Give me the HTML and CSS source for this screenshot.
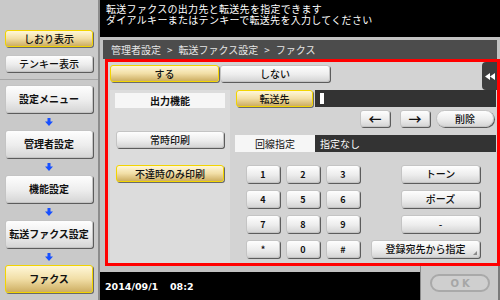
FILE: index.html
```html
<!DOCTYPE html>
<html lang="ja">
<head>
<meta charset="utf-8">
<link rel="stylesheet" href="styles.css">
</head>
<body>
<div class="screen">
  <aside class="side">
    <div class="side-top">
      <div class="btn yellow side-btn">しおり表示</div>
      <div class="btn side-btn">テンキー表示</div>
    </div>
    <div class="side-nav">
      <div class="btn nav-btn">設定メニュー</div>
      <div class="arrow"><svg width="8" height="8" viewBox="0 0 8 8"><path d="M2.5 0h3v3.5H8L4 8 0 3.5h2.5z" fill="#1850ff"/></svg></div>
      <div class="btn nav-btn">管理者設定</div>
      <div class="arrow"><svg width="8" height="8" viewBox="0 0 8 8"><path d="M2.5 0h3v3.5H8L4 8 0 3.5h2.5z" fill="#1850ff"/></svg></div>
      <div class="btn nav-btn">機能設定</div>
      <div class="arrow"><svg width="8" height="8" viewBox="0 0 8 8"><path d="M2.5 0h3v3.5H8L4 8 0 3.5h2.5z" fill="#1850ff"/></svg></div>
      <div class="btn nav-btn">転送ファクス設定</div>
      <div class="arrow"><svg width="8" height="8" viewBox="0 0 8 8"><path d="M2.5 0h3v3.5H8L4 8 0 3.5h2.5z" fill="#1850ff"/></svg></div>
      <div class="btn yellow nav-btn">ファクス</div>
    </div>
  </aside>
  <main class="main">
    <div class="msg">
      <div class="msg-line">転送ファクスの出力先と転送先を指定できます</div>
      <div class="msg-line">ダイアルキーまたはテンキーで転送先を入力してください</div>
    </div>
    <div class="work">
      <div class="crumb">管理者設定<span class="sep">&gt;</span>転送ファクス設定<span class="sep">&gt;</span>ファクス</div>
      <div class="panel">
        <div class="tab"><svg width="10" height="7" viewBox="0 0 10 7"><path d="M0 3.5L5 0v7zM5 3.5L10 0v7z" fill="#fff"/></svg></div>
        <div class="toggles">
          <div class="btn yellow tg">する</div>
          <div class="btn tg tg2">しない</div>
        </div>
        <div class="cols">
          <div class="left">
            <div class="label">出力機能</div>
            <div class="btn lbtn first">常時印刷</div>
            <div class="btn yellow lbtn second">不達時のみ印刷</div>
          </div>
          <div class="right">
            <div class="row">
              <div class="btn yellow dest">転送先</div>
              <div class="field"><span class="cursor"></span></div>
            </div>
            <div class="row edit">
              <div class="btn arr">←</div>
              <div class="btn arr arr2">→</div>
              <div class="btn pill">削除</div>
            </div>
            <div class="row line">
              <div class="wlabel">回線指定</div>
              <div class="field">指定なし</div>
            </div>
            <div class="keys">
              <div class="pad">
                <div class="btn key">1</div><div class="btn key">2</div><div class="btn key">3</div>
                <div class="btn key">4</div><div class="btn key">5</div><div class="btn key">6</div>
                <div class="btn key">7</div><div class="btn key">8</div><div class="btn key">9</div>
                <div class="btn key">*</div><div class="btn key">0</div><div class="btn key">#</div>
              </div>
              <div class="funcs">
                <div class="btn fn">トーン</div>
                <div class="btn fn">ポーズ</div>
                <div class="btn fn">-</div>
                <div class="btn fn wide">登録宛先から指定</div>
              </div>
            </div>
          </div>
        </div>
      </div>
    </div>
    <div class="foot">
      <div class="clock"><span class="date">2014/09/1</span><span>08:2</span></div>
      <div class="ok-tab"><div class="ok">OK</div></div>
    </div>
  </main>
</div>
</body>
</html>
```
FILE: styles.css
```css
* { box-sizing: border-box; }
html, body { margin: 0; padding: 0; }
body {
  width: 500px; height: 300px; overflow: hidden;
  font-family: "Noto Sans CJK JP", "Noto Sans", sans-serif;
  font-size: 10px; color: #111; background: #000;
}
.screen { display: flex; width: 500px; height: 300px; }

.btn {
  display: flex; align-items: center; justify-content: center;
  background: linear-gradient(#fefefe, #ededed 55%, #d6d6d6);
  border: 1px solid #c4c4c4;
  border-radius: 3px;
  box-shadow: 1px 1px 0 #5c5c5c;
  font-size: 10px; line-height: 1; font-weight: 500; white-space: nowrap;
}
.btn.yellow {
  background: linear-gradient(#fff7d8, #f1dea6 50%, #cdae62);
  border: 1px solid #f2d400;
  box-shadow: 1px 1px 0 #6a6a6a;
}

/* sidebar */
.side {
  width: 100px; height: 300px; background: #c9c9c9;
  border-right: 2px solid #8c8c8c;
}
.side-top {
  padding: 30px 5px 7px; display: flex; flex-direction: column; gap: 8px;
  border-bottom: 1px solid #a6a6a6;
}
.side-btn { height: 17px; width: 88px; }
.side-nav { padding: 5px 5px 0; display: flex; flex-direction: column; }
.nav-btn { height: 28px; width: 88px; font-weight: 700; }
.arrow { height: 17px; display: flex; align-items: center; justify-content: center; }
.arrow svg { display: block; }

/* main */
.main { width: 400px; display: flex; flex-direction: column; }
.msg {
  height: 37px; background: #000; color: #fff;
  padding: 3px 0 0 6px; font-size: 10px;
}
.msg-line { height: 11px; line-height: 11px; white-space: nowrap; letter-spacing: 0.3px; }
.work { background: #c2c2c2; padding: 3px 0 0 3px; }
.crumb {
  height: 19px; margin-right: 3px; background: #4c4c4c; color: #e6e6e6;
  padding-left: 8px; display: flex; align-items: center; font-size: 10px;
}
.sep { margin: 0 6px; }
.panel {
  position: relative; margin-left: 2px; height: 207px;
  border: 3px solid #ff0000; background: #d3d3d3;
}
.tab {
  position: absolute; top: 0; right: 0; width: 15px; height: 28px;
  background: #3e3e3e; border-radius: 4px 0 0 4px;
  display: flex; align-items: center; justify-content: center;
}
.tab svg { display: block; }
.toggles { display: flex; padding: 3px 0 0 2px; gap: 1px; }
.tg { width: 109px; height: 17px; }
.tg2 { width: 110px; }
.cols { display: flex; margin-top: 8px; }
.left {
  margin-left: 2px; width: 120px; height: 173px; background: #dcdcdc;
  padding: 3px 5px 0;
}
.label {
  height: 15px; background: #f6f6f6; display: flex; align-items: center;
  justify-content: center; font-weight: 700;
}
.lbtn { width: 108px; height: 17px; margin-left: 1px; }
.lbtn.first { margin-top: 23px; }
.lbtn.second { margin-top: 17px; }

.right { margin-left: 5px; width: 261px; }
.row { display: flex; height: 17px; }
.dest { width: 77px; margin-left: 1px; }
.field {
  flex: 1; margin-left: 2px; background: #333; color: #fff;
  display: flex; align-items: center; padding-left: 5px;
}
.cursor { width: 4px; height: 11px; background: #fff; }
.edit { margin-top: 3px; justify-content: flex-end; padding-right: 2px; }
.arr { width: 30px; font-size: 13px; font-weight: 700; }
.arr2 { margin-left: 10px; margin-right: 6px; }
.pill { width: 58px; border-radius: 9px; }
.line { margin-top: 8px; }
.wlabel {
  width: 80px; background: #f6f6f6; display: flex; align-items: center;
  justify-content: center;
}
.line .field { margin-left: 0; }

.keys { display: flex; margin-top: 13px; }
.pad {
  margin-left: 11px; display: grid; grid-template-columns: repeat(3, 34px);
  grid-auto-rows: 18px; column-gap: 6px; row-gap: 7px;
}
.key { font-size: 9px; font-weight: 700; }
.funcs {
  margin-left: 11px; width: 109px; display: flex; flex-direction: column;
  align-items: flex-end; gap: 7px;
}
.fn { width: 79px; height: 18px; }
.fn.wide { width: 109px; position: relative; }
.fn.wide::after {
  content: ""; position: absolute; right: 2px; bottom: 2px;
  border-left: 4px solid transparent; border-bottom: 4px solid #8a8a8a;
}

.foot { display: flex; height: 34px; background: #c2c2c2; }
.clock {
  flex: 1; margin-top: 6px; background: #000; color: #fff;
  display: flex; align-items: center; padding-left: 5px;
  font-family: "DejaVu Sans", sans-serif; font-size: 9.5px; font-weight: 700;
}
.date { width: 65px; }
.ok-tab {
  width: 80px; background: #c9c9c9; border-left: 1px solid #8a8a8a;
  border-right: 2px solid #7a7a7a; padding: 8px 0 0 9px;
}
.ok {
  width: 60px; height: 18px; border: 2px solid #a9a9a9; border-radius: 9px;
  background: #cfcfcf; color: #a6a6a6; display: flex; align-items: center;
  justify-content: center; font-family: "DejaVu Sans", sans-serif;
  font-size: 10px; font-weight: 700; letter-spacing: 3px; padding-left: 3px;
}
```
